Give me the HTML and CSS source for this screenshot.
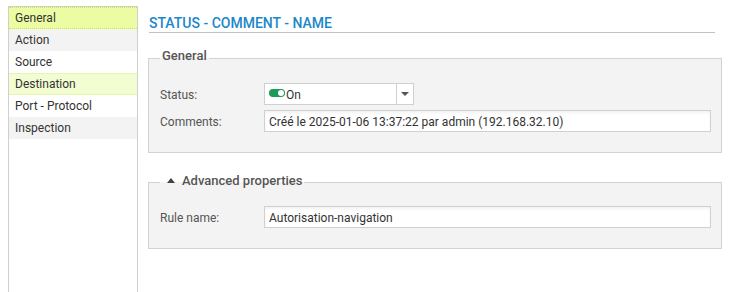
FILE: index.html
```html
<!DOCTYPE html>
<html lang="fr">
  <head>
    <meta charset="UTF-8" />
    <meta name="viewport" content="width=device-width, initial-scale=1.0" />
    <title>Rule</title>
    <link rel="stylesheet" href="styles.css">
  </head>
  <body>
    <div class="page">
      <ul class="menu">
        <li class="menu-item selected">General</li>
        <li class="menu-item alt">Action</li>
        <li class="menu-item">Source</li>
        <li class="menu-item marked">Destination</li>
        <li class="menu-item">Port - Protocol</li>
        <li class="menu-item alt">Inspection</li>
      </ul>

      <div class="content">
        <h2 class="title">STATUS - COMMENT - NAME</h2>

        <fieldset class="group general">
          <legend>General</legend>
          <div class="row">
            <label>Status:</label>
            <div class="select">
              <div class="select-value">
                <span class="toggle"><span class="knob"></span></span>On
              </div>
              <div class="select-arrow"><span class="caret"></span></div>
            </div>
          </div>
          <div class="row">
            <label>Comments:</label>
            <input class="field" type="text" value="Créé le 2025-01-06 13:37:22 par admin (192.168.32.10)" />
          </div>
        </fieldset>

        <fieldset class="group advanced">
          <legend><span class="up"></span>Advanced properties</legend>
          <div class="row">
            <label>Rule name:</label>
            <input class="field" type="text" value="Autorisation-navigation" />
          </div>
        </fieldset>
      </div>
    </div>
  </body>
</html>
```

FILE: styles.css
```css
body {
  margin: 0;
  background-color: white;
  font-family: Roboto, "Liberation Sans", sans-serif;
  font-size: 12px;
  color: #333;
  overflow: hidden;
}
.page {
  display: flex;
  align-items: flex-start;
}
.menu {
  list-style: none;
  margin: 6px 0 0 8px;
  padding: 0;
  width: 128px;
  height: 285px;
  border: 1px solid #cfcfcf;
  border-bottom: none;
}
.menu-item {
  height: 22px;
  line-height: 21px;
  padding: 1px 0 0 6px;
  box-sizing: border-box;
  color: #333;
  background-color: white;
}
.menu-item.alt {
  background-color: #f3f3f3;
}
.menu-item.selected {
  background-color: #ebfca3;
  border-top: 1px dotted #cde654;
  border-bottom: 1px dotted #cde654;
  line-height: 19px;
}
.menu-item.marked {
  background-color: #f3fdd2;
  border-top: 1px solid #e4f5b0;
  border-bottom: 1px solid #e4f5b0;
  line-height: 19px;
}
.content {
  margin-left: 10px;
  width: 574px;
}
.title {
  margin: 15px 7px 0 1px;
  padding-bottom: 1px;
  font-size: 14px;
  line-height: 16px;
  font-weight: 500;
  color: #1c87c9;
  border-bottom: 1px solid #c2c2c2;
}
.group {
  margin: 15px 0 0 0;
  padding: 15px 10px 20px 11px;
  border: 1px solid #d2d2d2;
  background-color: #f3f3f3;
}
.group.advanced {
  margin-top: 19px;
  padding-top: 14px;
}
.group legend {
  padding: 0 2px 4px 2px;
  font-size: 13px;
  line-height: 16px;
  font-weight: 500;
  color: #555;
}
.group.advanced legend {
  padding: 1px 2px 3px 2px;
}
.up {
  display: inline-block;
  width: 0;
  height: 0;
  margin: 0 7px 2px 5px;
  vertical-align: middle;
  border-left: 4px solid transparent;
  border-right: 4px solid transparent;
  border-bottom: 5px solid #444;
}
.row {
  display: flex;
  align-items: center;
}
.row + .row {
  margin-top: 5px;
}
.row label {
  width: 104px;
  padding-top: 1px;
  color: #555;
}
.field {
  flex: 1;
  height: 22px;
  box-sizing: border-box;
  margin: 0;
  padding: 1px 4px 0 4px;
  border: 1px solid #d0d0d0;
  background-color: white;
  box-shadow: inset 0 2px 3px rgba(0, 0, 0, 0.05);
  font-family: Roboto, "Liberation Sans", sans-serif;
  font-size: 12px;
  color: #333;
  outline: none;
}
.select {
  display: flex;
  width: 150px;
  height: 22px;
  box-sizing: border-box;
  border: 1px solid #d0d0d0;
  background-color: white;
}
.select-value {
  flex: 1;
  display: flex;
  align-items: center;
  padding: 1px 0 0 4px;
  color: #333;
}
.toggle {
  position: relative;
  display: inline-block;
  width: 16px;
  height: 8px;
  border-radius: 4px;
  background-color: #1b9a5c;
  margin-right: 1px;
  margin-top: -4px;
}
.knob {
  position: absolute;
  right: 1px;
  top: 1px;
  width: 6px;
  height: 6px;
  border-radius: 50%;
  background-color: white;
}
.select-arrow {
  width: 16px;
  border-left: 1px solid #d0d0d0;
  display: flex;
  align-items: center;
  justify-content: center;
}
.caret {
  width: 0;
  height: 0;
  border-left: 4px solid transparent;
  border-right: 4px solid transparent;
  border-top: 4px solid #555;
}
```
